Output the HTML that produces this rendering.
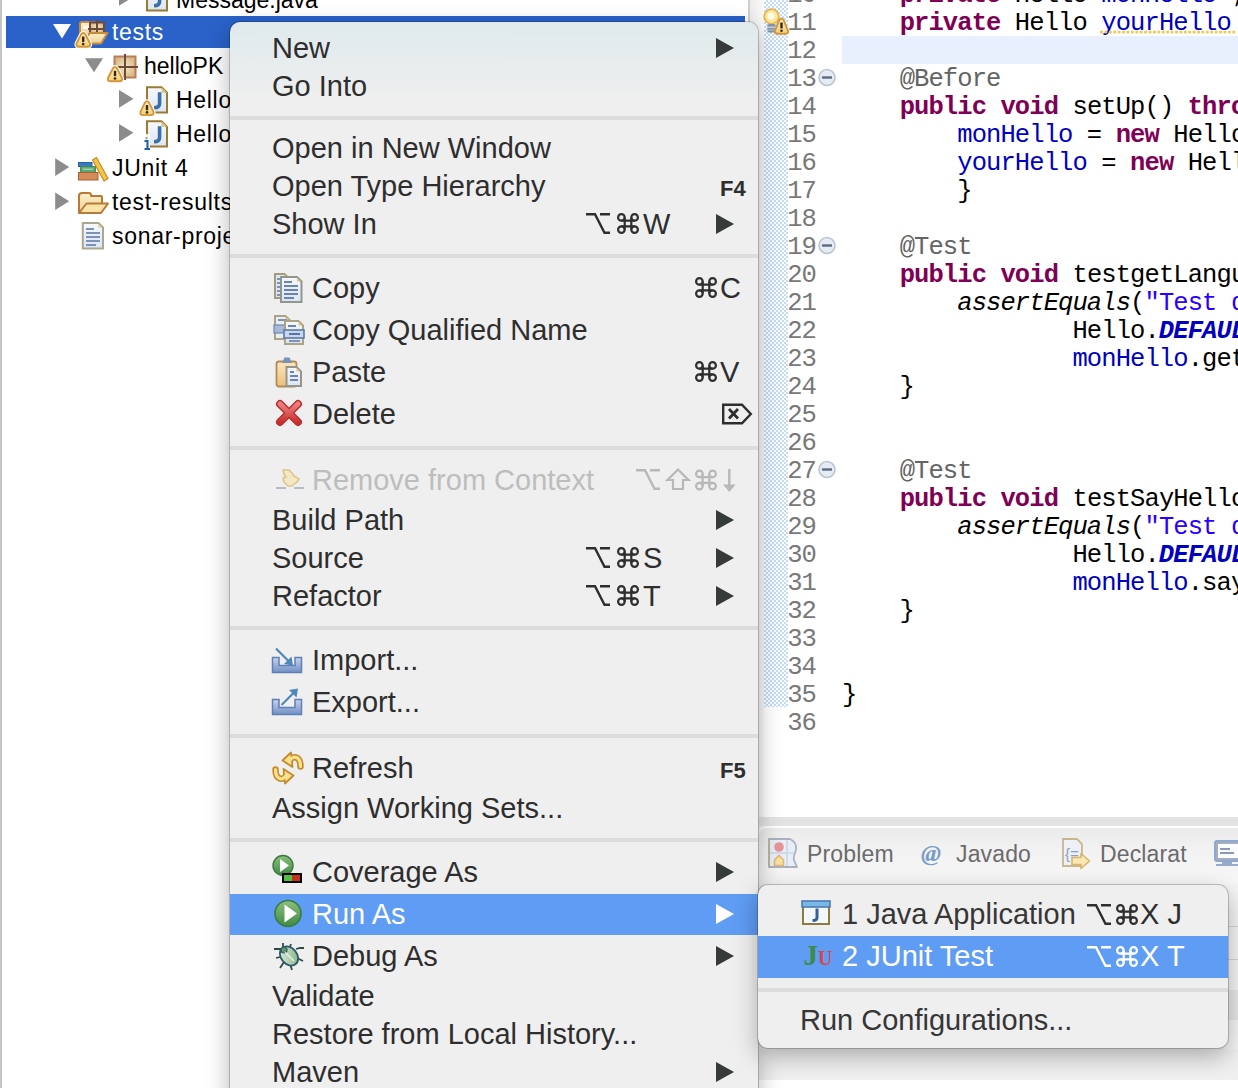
<!DOCTYPE html>
<html><head><meta charset="utf-8">
<style>
*{margin:0;padding:0;box-sizing:border-box}
html,body{width:1238px;height:1088px;overflow:hidden;background:#fff}
body{position:relative;font-family:"Liberation Sans",sans-serif}
.abs{position:absolute}
svg{position:absolute;overflow:visible}
.tr{position:absolute;height:34px;line-height:34px;font-size:23px;letter-spacing:0.7px;color:#000;white-space:nowrap}
.ln{position:absolute;left:700px;width:116px;text-align:right;font-family:"Liberation Mono",monospace;font-size:25.5px;letter-spacing:-0.9px;color:#787878;height:28px;line-height:28px}
.cd{position:absolute;left:842px;font-family:"Liberation Mono",monospace;font-size:25.5px;letter-spacing:-0.9px;color:#000;height:28px;line-height:28px;white-space:pre}
.k{color:#7f0055;font-weight:bold}
.f{color:#0000c0}
.s{color:#2a00ff}
.a{color:#646464}
.sf{color:#0000c0;font-weight:bold;font-style:italic}
.it{font-style:italic}
.menu{position:absolute;border-radius:10px;box-shadow:0 0 0 1px rgba(0,0,0,0.20),0 8px 24px rgba(0,0,0,0.30);overflow:hidden;background:#efefef}
.mi{position:absolute;left:0;right:0;font-size:29px;color:#363636;white-space:nowrap}
.mi .t{position:absolute;top:0}
.sc{position:absolute;top:0;font-size:26px;color:#2e2e2e}
.sep{position:absolute;left:0;right:0;height:4px;background:#dcdcdc}
.arr{position:absolute;width:0;height:0;border-top:10px solid transparent;border-bottom:10px solid transparent;border-left:18px solid #363a3a}
.tab{position:absolute;font-size:23px;letter-spacing:0.15px;color:#6b6b6b;line-height:32px;white-space:nowrap}
</style></head>
<body>
<div class="abs" style="left:0;top:0;width:2px;height:1088px;background:#c4c5c0"></div>
<div class="tr" style="left:176px;top:-17px;letter-spacing:0">Message.java</div>
<div class="abs" style="left:6px;top:16px;width:739px;height:32px;background:#2a62ca"></div>
<div class="tr" style="left:112px;top:15px;color:#fff;">tests</div>
<div class="tr" style="left:144px;top:49px;color:#000;letter-spacing:0;">helloPK</div>
<div class="tr" style="left:176px;top:83px;color:#000;">HelloTest</div>
<div class="tr" style="left:176px;top:117px;color:#000;">HelloTest</div>
<div class="tr" style="left:112px;top:151px;color:#000;">JUnit 4</div>
<div class="tr" style="left:112px;top:185px;color:#000;">test-results</div>
<div class="tr" style="left:112px;top:219px;color:#000;">sonar-project.properties</div>
<div class="abs" style="left:748px;top:0;width:2px;height:1088px;background:#cfcfcf"></div>
<div class="abs" style="left:750px;top:0;width:14px;height:1088px;background:linear-gradient(90deg,#ececec,#fafafa)"></div>
<div class="abs" style="left:764px;top:0;width:24px;height:707px;background:repeating-conic-gradient(#c2dbfb 0 25%,#ffffff 0 50%) 0 0/4px 4px"></div>
<div class="abs" style="left:842px;top:36px;width:396px;height:28px;background:#e8f0fd"></div>
<div class="ln" style="top:-18.5px">10</div>
<div class="cd" style="top:-18.5px">    <span class="k">private</span> Hello <span class="f">monHello</span> ;</div>
<div class="ln" style="top:9.5px">11</div>
<div class="cd" style="top:9.5px">    <span class="k">private</span> Hello <span class="f">yourHello</span> ;</div>
<div class="ln" style="top:37.5px">12</div>
<div class="ln" style="top:65.5px">13</div>
<div class="cd" style="top:65.5px">    <span class="a">@Before</span></div>
<div class="ln" style="top:93.5px">14</div>
<div class="cd" style="top:93.5px">    <span class="k">public</span> <span class="k">void</span> setUp() <span class="k">throws</span> Exception {</div>
<div class="ln" style="top:121.5px">15</div>
<div class="cd" style="top:121.5px">        <span class="f">monHello</span> = <span class="k">new</span> Hello();</div>
<div class="ln" style="top:149.5px">16</div>
<div class="cd" style="top:149.5px">        <span class="f">yourHello</span> = <span class="k">new</span> Hello();</div>
<div class="ln" style="top:177.5px">17</div>
<div class="cd" style="top:177.5px">        }</div>
<div class="ln" style="top:205.5px">18</div>
<div class="ln" style="top:233.5px">19</div>
<div class="cd" style="top:233.5px">    <span class="a">@Test</span></div>
<div class="ln" style="top:261.5px">20</div>
<div class="cd" style="top:261.5px">    <span class="k">public</span> <span class="k">void</span> testgetLanguage() {</div>
<div class="ln" style="top:289.5px">21</div>
<div class="cd" style="top:289.5px">        <span class="it">assertEquals</span>(<span class="s">"Test de"</span>,</div>
<div class="ln" style="top:317.5px">22</div>
<div class="cd" style="top:317.5px">                Hello.<span class="sf">DEFAULT</span>,</div>
<div class="ln" style="top:345.5px">23</div>
<div class="cd" style="top:345.5px">                <span class="f">monHello</span>.getLanguage());</div>
<div class="ln" style="top:373.5px">24</div>
<div class="cd" style="top:373.5px">    }</div>
<div class="ln" style="top:401.5px">25</div>
<div class="ln" style="top:429.5px">26</div>
<div class="ln" style="top:457.5px">27</div>
<div class="cd" style="top:457.5px">    <span class="a">@Test</span></div>
<div class="ln" style="top:485.5px">28</div>
<div class="cd" style="top:485.5px">    <span class="k">public</span> <span class="k">void</span> testSayHello() {</div>
<div class="ln" style="top:513.5px">29</div>
<div class="cd" style="top:513.5px">        <span class="it">assertEquals</span>(<span class="s">"Test de"</span>,</div>
<div class="ln" style="top:541.5px">30</div>
<div class="cd" style="top:541.5px">                Hello.<span class="sf">DEFAULT</span>,</div>
<div class="ln" style="top:569.5px">31</div>
<div class="cd" style="top:569.5px">                <span class="f">monHello</span>.sayHello());</div>
<div class="ln" style="top:597.5px">32</div>
<div class="cd" style="top:597.5px">    }</div>
<div class="ln" style="top:625.5px">33</div>
<div class="ln" style="top:653.5px">34</div>
<div class="ln" style="top:681.5px">35</div>
<div class="cd" style="top:681.5px">}</div>
<div class="ln" style="top:709.5px">36</div>
<div class="abs" style="left:759px;top:817px;width:479px;height:9px;background:#e3e3e3"></div>
<div class="abs" style="left:759px;top:826px;width:479px;height:262px;background:#f5f5f5"></div>
<div class="abs" style="left:759px;top:826px;width:479px;height:58px;background:linear-gradient(#ebebeb,#f2f2f2 40%,#f8f8f8);border-top:2px solid #fff;border-top-left-radius:8px"></div>
<div class="tab" style="left:807px;top:838px">Problem</div>
<div class="tab" style="left:956px;top:838px">Javado</div>
<div class="tab" style="left:1100px;top:838px">Declarat</div>
<div class="abs" style="left:759px;top:926px;width:479px;height:1px;background:#d6d6d6"></div>
<div class="abs" style="left:759px;top:959px;width:479px;height:1px;background:#d6d6d6"></div>
<div class="abs" style="left:759px;top:990px;width:479px;height:30px;background:#e8e8e8"></div>
<div class="abs" style="left:759px;top:1049px;width:479px;height:31px;background:#f0f0f0"></div>
<div class="abs" style="left:759px;top:1080px;width:479px;height:8px;background:#fff"></div>
<svg style="left:0;top:0" width="1238" height="1088"><defs>
<linearGradient id="gwarn" x1="0" y1="0" x2="0" y2="1"><stop offset="0" stop-color="#fcf0c0"/><stop offset="1" stop-color="#f0cf78"/></linearGradient>
<linearGradient id="gjf" x1="0" y1="0" x2="0" y2="1"><stop offset="0" stop-color="#f6f9fd"/><stop offset="1" stop-color="#dbe5f3"/></linearGradient>
<linearGradient id="gtan" x1="0" y1="0" x2="0" y2="1"><stop offset="0" stop-color="#fbf0cc"/><stop offset="1" stop-color="#ecd092"/></linearGradient>
<radialGradient id="gpkg"><stop offset="0" stop-color="#f6ecc8"/><stop offset="1" stop-color="#d9b98c"/></radialGradient>
<linearGradient id="ggreen" x1="0" y1="0" x2="0" y2="1"><stop offset="0" stop-color="#8cc07c"/><stop offset="1" stop-color="#3f8a44"/></linearGradient>
<linearGradient id="gred" x1="0" y1="0" x2="0" y2="1"><stop offset="0" stop-color="#ee8080"/><stop offset="1" stop-color="#c83030"/></linearGradient>
<linearGradient id="gtray" x1="0" y1="0" x2="0" y2="1"><stop offset="0" stop-color="#c8d4ec"/><stop offset="1" stop-color="#7090c4"/></linearGradient>
<linearGradient id="ggold" x1="0" y1="0" x2="0" y2="1"><stop offset="0" stop-color="#fff0b0"/><stop offset="1" stop-color="#f0b848"/></linearGradient>
<linearGradient id="gclip" x1="0" y1="0" x2="0" y2="1"><stop offset="0" stop-color="#fbe8c0"/><stop offset="1" stop-color="#eac078"/></linearGradient>
<linearGradient id="gbug" x1="0" y1="0" x2="1" y2="1"><stop offset="0" stop-color="#e6f2e0"/><stop offset="1" stop-color="#7fae84"/></linearGradient>
</defs><polygon points="53,24 71,24 62,38.6" fill="#fff"/><polygon points="85,58.2 103,58.2 94,72.3" fill="#8c8c8c"/><polygon points="119,-12 133.5,-3.1500000000000004 119,5.699999999999999" fill="#8c8c8c"/><polygon points="119,90 133.5,98.85 119,107.7" fill="#8c8c8c"/><polygon points="119,124 133.5,132.85 119,141.7" fill="#8c8c8c"/><polygon points="55.2,158.2 69.2,167.04999999999998 55.2,175.89999999999998" fill="#8c8c8c"/><polygon points="55.2,192.4 69.2,201.25 55.2,210.1" fill="#8c8c8c"/><path d="M80,24 Q80,22 82,22 H94 V36 H80 Z" fill="url(#gtan)" stroke="#c98b3c" stroke-width="2"/><rect x="83" y="26" width="10" height="3" fill="#fff" opacity="0.8"/><rect x="90" y="22.5" width="14" height="11" fill="url(#gpkg)" stroke="#6e4a38" stroke-width="2"/><path d="M97,20 V34 M88,29 H105" stroke="#6e4a38" stroke-width="2"/><path d="M89.5,33 H107.5 L101,43.5 H83.5 Z" fill="url(#gtan)" stroke="#c98b3c" stroke-width="2" stroke-linejoin="round"/><path d="M81.0,34.6 Q83.2,31.4 85.5,34.6 L89.9,43.3 Q91.1,46.8 87.3,46.8 L79.2,46.8 Q75.4,46.8 76.6,43.3 Z" fill="#fff" stroke="#fff" stroke-width="4" stroke-linejoin="round"/><path d="M81.0,34.6 Q83.2,31.4 85.5,34.6 L89.9,43.3 Q91.1,46.8 87.3,46.8 L79.2,46.8 Q75.4,46.8 76.6,43.3 Z" fill="url(#gwarn)" stroke="#d4963a" stroke-width="1.9" stroke-linejoin="round"/><rect x="82.0" y="36.6" width="2.4" height="5.3" rx="0.6" fill="#3a2610"/><circle cx="83.2" cy="44.1" r="1.3" fill="#3a2610"/><rect x="114.5" y="56.5" width="21" height="21" fill="url(#gpkg)" stroke="#b97e58" stroke-width="2"/><path d="M125,54 V80 M113,67 H138" stroke="#6e4a38" stroke-width="2"/><path d="M112.8,68.6 Q115.0,65.4 117.2,68.6 L121.9,77.8 Q123.1,81.3 119.3,81.3 L110.7,81.3 Q106.9,81.3 108.1,77.8 Z" fill="#fff" stroke="#fff" stroke-width="4" stroke-linejoin="round"/><path d="M112.8,68.6 Q115.0,65.4 117.2,68.6 L121.9,77.8 Q123.1,81.3 119.3,81.3 L110.7,81.3 Q106.9,81.3 108.1,77.8 Z" fill="url(#gwarn)" stroke="#d4963a" stroke-width="1.9" stroke-linejoin="round"/><rect x="113.8" y="70.8" width="2.4" height="5.4" rx="0.6" fill="#3a2610"/><circle cx="115.0" cy="78.5" r="1.3" fill="#3a2610"/><path d="M147,-14.799999999999997 H161.5 L167,-9.299999999999997 V10.500000000000004 H147 Z" fill="url(#gjf)" stroke="#9b7b32" stroke-width="2"/><path d="M161.5,-14.799999999999997 V-9.299999999999997 H167 Z" fill="#d9c588"/><path d="M159.6,-9.799999999999997 V1.2000000000000028 Q159.6,5.700000000000003 154,5.700000000000003" fill="none" stroke="#3d6ea6" stroke-width="3.6"/><path d="M147,87.2 H161.5 L167,92.7 V112.5 H147 Z" fill="url(#gjf)" stroke="#9b7b32" stroke-width="2"/><path d="M161.5,87.2 V92.7 H167 Z" fill="#d9c588"/><path d="M159.6,92.2 V103.2 Q159.6,107.7 154,107.7" fill="none" stroke="#3d6ea6" stroke-width="3.6"/><path d="M144.8,102.9 Q147.0,99.7 149.2,102.9 L153.4,111.6 Q154.6,115.1 150.8,115.1 L143.2,115.1 Q139.4,115.1 140.6,111.6 Z" fill="#fff" stroke="#fff" stroke-width="4" stroke-linejoin="round"/><path d="M144.8,102.9 Q147.0,99.7 149.2,102.9 L153.4,111.6 Q154.6,115.1 150.8,115.1 L143.2,115.1 Q139.4,115.1 140.6,111.6 Z" fill="url(#gwarn)" stroke="#d4963a" stroke-width="1.9" stroke-linejoin="round"/><rect x="145.8" y="105.0" width="2.4" height="5.3" rx="0.6" fill="#3a2610"/><circle cx="147.0" cy="112.4" r="1.3" fill="#3a2610"/><path d="M147,121.3 H161.5 L167,126.8 V146.6 H147 Z" fill="url(#gjf)" stroke="#9b7b32" stroke-width="2"/><path d="M161.5,121.3 V126.8 H167 Z" fill="#d9c588"/><path d="M159.6,126.3 V137.3 Q159.6,141.8 154,141.8" fill="none" stroke="#3d6ea6" stroke-width="3.6"/><rect x="144" y="134" width="6" height="16" fill="#fff" opacity="0.85"/><path d="M146.5,137.5 V138.5 M144.5,141 H147.5 V149 M144.5,149 H150" stroke="#1f5fa8" stroke-width="2" fill="none"/><rect x="78.5" y="162.5" width="13.5" height="4" fill="#3a7ac2" stroke="#2c5d9c" stroke-width="1"/><rect x="80.5" y="166.5" width="15" height="6" fill="#5aa97a" stroke="#3f8a5c" stroke-width="1"/><rect x="83" y="168.5" width="10" height="1.5" fill="#9fd0a8"/><rect x="78.5" y="172.5" width="19.5" height="7.5" fill="#d48c58" stroke="#a85e32" stroke-width="1"/><polygon points="92.5,160 96.5,157.5 108,178.5 104,181" fill="#f2c640" stroke="#c88a30" stroke-width="1.2" stroke-linejoin="round"/><path d="M79,213 V196 Q79,193 82,193 H89 Q91,193 91,195 V196 H101 Q102,196 102,197 V203" fill="url(#gtan)" stroke="#b77a38" stroke-width="2" stroke-linejoin="round"/><path d="M79,213 L86.5,203.5 H108 L101,213 Z" fill="#f9e3a6" stroke="#b77a38" stroke-width="2" stroke-linejoin="round"/><path d="M82.8,223 H98.5 L103.0,227.5 V248.5 H82.8 Z" fill="url(#gjf)" stroke="#a9a78e" stroke-width="2"/><path d="M98.5,223.5 V227.5 H102.5 Z" fill="#dcc894"/><rect x="86" y="228" width="8" height="2" fill="#7c92bb"/><rect x="86" y="232" width="14" height="2" fill="#7c92bb"/><rect x="86" y="236" width="14" height="2" fill="#7c92bb"/><rect x="86" y="240" width="14" height="2" fill="#7c92bb"/><rect x="86" y="244" width="10" height="2" fill="#7c92bb"/><circle cx="771.5" cy="16.5" r="7.3" fill="#fbe7a0" stroke="#e8b84c" stroke-width="1.8"/><circle cx="771" cy="16" r="3.5" fill="#fffcea"/><rect x="767.5" y="24" width="8" height="8.5" rx="1.5" fill="#8593aa"/><rect x="767.5" y="26.5" width="8" height="1.6" fill="#c9d1dc"/><rect x="767.5" y="29.5" width="8" height="1.2" fill="#b0bacb"/><path d="M779.3,20.1 Q781.5,16.9 783.7,20.1 L787.9,30.3 Q789.1,33.8 785.3,33.8 L777.7,33.8 Q773.9,33.8 775.1,30.3 Z" fill="url(#gwarn)" stroke="#d4963a" stroke-width="1.9" stroke-linejoin="round"/><rect x="780.3" y="22.6" width="2.4" height="5.8" rx="0.6" fill="#3a2610"/><circle cx="781.5" cy="30.8" r="1.3" fill="#3a2610"/><circle cx="827" cy="77.5" r="8" fill="#e5ebf2" stroke="#bcc6d3" stroke-width="1.6"/><rect x="822" y="76.3" width="10" height="2.4" fill="#5c6b80"/><circle cx="827" cy="245.5" r="8" fill="#e5ebf2" stroke="#bcc6d3" stroke-width="1.6"/><rect x="822" y="244.3" width="10" height="2.4" fill="#5c6b80"/><circle cx="827" cy="469.5" r="8" fill="#e5ebf2" stroke="#bcc6d3" stroke-width="1.6"/><rect x="822" y="468.3" width="10" height="2.4" fill="#5c6b80"/><path d="M1101.5,32 H1238" stroke="#f0c850" stroke-width="3.2" stroke-dasharray="0.01 4.4" stroke-linecap="round"/><path d="M769,839 H790 Q797,842 796,850 Q793,857 794,860 L797,867 H769 Z" fill="#e7eef6" stroke="#a9b1bf" stroke-width="1.8" stroke-linejoin="round"/><path d="M769,839 V867" stroke="#b9b49a" stroke-width="1.8"/><path d="M787,840 V866 M770,853 H793" stroke="#cbd6e6" stroke-width="1.6"/><circle cx="779" cy="847" r="4.8" fill="#e8959a"/><path d="M774.5,865.5 V860 L779,855.5 L783.5,860 V865.5 Z" fill="#f7e3a0" stroke="#e5b47c" stroke-width="1.6"/><text x="921" y="861" font-family="Liberation Serif" font-style="italic" font-weight="bold" font-size="24" fill="#7a9cc6">@</text><path d="M1063,839 H1077 L1082,844 V866 H1063 Z" fill="#edf1f7" stroke="#c8b68e" stroke-width="1.8"/><text x="1065" y="859" font-family="Liberation Sans" font-size="15" fill="#8aa0c0">{=</text><path d="M1072,857.5 H1081 V853.5 L1089.5,861 L1081,868.5 V864.5 H1072 Z" fill="#fbe8b0" stroke="#d8b470" stroke-width="1.6" stroke-linejoin="round"/><rect x="1215" y="841" width="30" height="20" rx="2" fill="#a4aec0" stroke="#8fa8d0" stroke-width="2"/><rect x="1218" y="844" width="20" height="14" fill="#fbfdff"/><rect x="1220" y="848" width="10" height="2" fill="#8d98b8"/><rect x="1220" y="852" width="14" height="2" fill="#8d98b8"/><rect x="1222" y="862" width="10" height="2" fill="#98abcc"/><rect x="1216" y="864" width="22" height="2" fill="#98abcc"/></svg>
<div class="menu" style="left:230px;top:22px;width:528px;height:1100px;background:linear-gradient(#e0eaeb 0,#e6eced 35px,#efefef 78px,#efefef)">
<div class="mi" style="top:7px;height:38px;line-height:38px;color:#2e2e2e"><span class="t" style="left:42px">New</span></div>
<div class="arr" style="left:486px;top:16px;border-left-color:#363a3a"></div>
<div class="mi" style="top:45px;height:38px;line-height:38px;color:#2e2e2e"><span class="t" style="left:42px">Go Into</span></div>
<div class="sep" style="top:94px"></div>
<div class="mi" style="top:107px;height:38px;line-height:38px;color:#2e2e2e"><span class="t" style="left:42px">Open in New Window</span></div>
<div class="mi" style="top:145px;height:38px;line-height:38px;color:#2e2e2e"><span class="t" style="left:42px">Open Type Hierarchy</span></div>
<div class="sc" style="left:490px;top:148px;line-height:38px;font-size:22px;font-weight:bold;color:#2e2e2e">F4</div>
<div class="mi" style="top:183px;height:38px;line-height:38px;color:#2e2e2e"><span class="t" style="left:42px">Show In</span></div>
<div class="sc" style="left:413px;top:183px;line-height:38px;font-size:29px;color:#2e2e2e">W</div>
<div class="arr" style="left:486px;top:192px;border-left-color:#363a3a"></div>
<div class="sep" style="top:232px"></div>
<div class="mi" style="top:247px;height:38px;line-height:38px;color:#2e2e2e"><span class="t" style="left:82px">Copy</span></div>
<div class="sc" style="left:490px;top:247px;line-height:38px;font-size:29px;color:#2e2e2e">C</div>
<div class="mi" style="top:289px;height:38px;line-height:38px;color:#2e2e2e"><span class="t" style="left:82px">Copy Qualified Name</span></div>
<div class="mi" style="top:331px;height:38px;line-height:38px;color:#2e2e2e"><span class="t" style="left:82px">Paste</span></div>
<div class="sc" style="left:490px;top:331px;line-height:38px;font-size:29px;color:#2e2e2e">V</div>
<div class="mi" style="top:373px;height:38px;line-height:38px;color:#2e2e2e"><span class="t" style="left:82px">Delete</span></div>
<div class="sep" style="top:424px"></div>
<div class="mi" style="top:439px;height:38px;line-height:38px;color:#bdbdbd"><span class="t" style="left:82px">Remove from Context</span></div>
<div class="mi" style="top:479px;height:38px;line-height:38px;color:#2e2e2e"><span class="t" style="left:42px">Build Path</span></div>
<div class="arr" style="left:486px;top:488px;border-left-color:#363a3a"></div>
<div class="mi" style="top:517px;height:38px;line-height:38px;color:#2e2e2e"><span class="t" style="left:42px">Source</span></div>
<div class="sc" style="left:413px;top:517px;line-height:38px;font-size:29px;color:#2e2e2e">S</div>
<div class="arr" style="left:486px;top:526px;border-left-color:#363a3a"></div>
<div class="mi" style="top:555px;height:38px;line-height:38px;color:#2e2e2e"><span class="t" style="left:42px">Refactor</span></div>
<div class="sc" style="left:413px;top:555px;line-height:38px;font-size:29px;color:#2e2e2e">T</div>
<div class="arr" style="left:486px;top:564px;border-left-color:#363a3a"></div>
<div class="sep" style="top:604px"></div>
<div class="mi" style="top:619px;height:38px;line-height:38px;color:#2e2e2e"><span class="t" style="left:82px">Import...</span></div>
<div class="mi" style="top:661px;height:38px;line-height:38px;color:#2e2e2e"><span class="t" style="left:82px">Export...</span></div>
<div class="sep" style="top:712px"></div>
<div class="mi" style="top:727px;height:38px;line-height:38px;color:#2e2e2e"><span class="t" style="left:82px">Refresh</span></div>
<div class="sc" style="left:490px;top:730px;line-height:38px;font-size:22px;font-weight:bold;color:#2e2e2e">F5</div>
<div class="mi" style="top:767px;height:38px;line-height:38px;color:#2e2e2e"><span class="t" style="left:42px">Assign Working Sets...</span></div>
<div class="sep" style="top:816px"></div>
<div class="mi" style="top:831px;height:38px;line-height:38px;color:#2e2e2e"><span class="t" style="left:82px">Coverage As</span></div>
<div class="arr" style="left:486px;top:840px;border-left-color:#363a3a"></div>
<div class="abs" style="left:0;right:0;top:872px;height:41px;background:#5f9cf4"></div>
<div class="mi" style="top:873px;height:38px;line-height:38px;color:#fff"><span class="t" style="left:82px">Run As</span></div>
<div class="arr" style="left:486px;top:882px;border-left-color:#fff"></div>
<div class="mi" style="top:915px;height:38px;line-height:38px;color:#2e2e2e"><span class="t" style="left:82px">Debug As</span></div>
<div class="arr" style="left:486px;top:924px;border-left-color:#363a3a"></div>
<div class="mi" style="top:955px;height:38px;line-height:38px;color:#2e2e2e"><span class="t" style="left:42px">Validate</span></div>
<div class="mi" style="top:993px;height:38px;line-height:38px;color:#2e2e2e"><span class="t" style="left:42px">Restore from Local History...</span></div>
<div class="mi" style="top:1031px;height:38px;line-height:38px;color:#2e2e2e"><span class="t" style="left:42px">Maven</span></div>
<div class="arr" style="left:486px;top:1040px;border-left-color:#363a3a"></div>
</div>
<div class="menu" style="left:758px;top:885px;width:470px;height:163px">
<div class="abs" style="left:0;right:0;top:51px;height:42px;background:#5f9cf4"></div>
<div class="mi" style="top:10px;height:38px;line-height:38px"><span class="t" style="left:84px">1 Java Application</span></div>
<div class="mi" style="top:52px;height:38px;line-height:38px;color:#fff"><span class="t" style="left:84px">2 JUnit Test</span></div>
<div class="sep" style="top:103px"></div>
<div class="mi" style="top:116px;height:38px;line-height:38px"><span class="t" style="left:42px">Run Configurations...</span></div>
</div>
<div class="sc" style="left:1140px;top:895px;line-height:38px;font-size:29px;color:#2e2e2e">X J</div>
<div class="sc" style="left:1140px;top:937px;line-height:38px;font-size:29px;color:#fff">X T</div>
<svg style="left:0;top:0" width="1238" height="1088"><defs>
<linearGradient id="hwarn" x1="0" y1="0" x2="0" y2="1"><stop offset="0" stop-color="#fcf0c0"/><stop offset="1" stop-color="#f0cf78"/></linearGradient>
<linearGradient id="hjf" x1="0" y1="0" x2="0" y2="1"><stop offset="0" stop-color="#f6f9fd"/><stop offset="1" stop-color="#dbe5f3"/></linearGradient>
<linearGradient id="htan" x1="0" y1="0" x2="0" y2="1"><stop offset="0" stop-color="#fbf0cc"/><stop offset="1" stop-color="#ecd092"/></linearGradient>
<radialGradient id="hpkg"><stop offset="0" stop-color="#f6ecc8"/><stop offset="1" stop-color="#d9b98c"/></radialGradient>
<linearGradient id="hgreen" x1="0" y1="0" x2="0" y2="1"><stop offset="0" stop-color="#8cc07c"/><stop offset="1" stop-color="#3f8a44"/></linearGradient>
<linearGradient id="hred" x1="0" y1="0" x2="0" y2="1"><stop offset="0" stop-color="#ee8080"/><stop offset="1" stop-color="#c83030"/></linearGradient>
<linearGradient id="htray" x1="0" y1="0" x2="0" y2="1"><stop offset="0" stop-color="#c8d4ec"/><stop offset="1" stop-color="#7090c4"/></linearGradient>
<linearGradient id="hgold" x1="0" y1="0" x2="0" y2="1"><stop offset="0" stop-color="#fff0b0"/><stop offset="1" stop-color="#f0b848"/></linearGradient>
<linearGradient id="hclip" x1="0" y1="0" x2="0" y2="1"><stop offset="0" stop-color="#fbe8c0"/><stop offset="1" stop-color="#eac078"/></linearGradient>
<linearGradient id="hbug" x1="0" y1="0" x2="1" y2="1"><stop offset="0" stop-color="#e6f2e0"/><stop offset="1" stop-color="#7fae84"/></linearGradient>
</defs><path d="M275,274 H284.5 L289,278.5 V298 H275 Z" fill="#dfe7f1" stroke="#a19b7b" stroke-width="2"/><path d="M284.5,274.5 V278.5 H288.5 Z" fill="#d9c588"/><rect x="277" y="278" width="5" height="2" fill="#7c92bb"/><rect x="277" y="282" width="5" height="2" fill="#7c92bb"/><rect x="277" y="286" width="5" height="2" fill="#7c92bb"/><rect x="277" y="290" width="5" height="2" fill="#7c92bb"/><rect x="277" y="294" width="5" height="2" fill="#7c92bb"/><path d="M281,277 H297.0 L301.5,281.5 V302 H281 Z" fill="url(#hjf)" stroke="#90968c" stroke-width="2"/><path d="M297.0,277.5 V281.5 H301.0 Z" fill="#d9c588"/><rect x="284" y="281" width="8" height="2" fill="#6a84b4"/><rect x="284" y="285" width="14" height="2" fill="#6a84b4"/><rect x="284" y="289" width="14" height="2" fill="#6a84b4"/><rect x="284" y="293" width="14" height="2" fill="#6a84b4"/><rect x="284" y="297" width="10" height="2" fill="#6a84b4"/><path d="M275,316 H285.5 L290,320.5 V339 H275 Z" fill="#e9eef5" stroke="#aba484" stroke-width="2"/><path d="M285.5,316.5 V320.5 H289.5 Z" fill="#d9c588"/><rect x="278" y="319" width="9" height="2" fill="#7c92bb"/><rect x="274" y="325" width="17" height="8" fill="#a8b8d8" stroke="#7088b0" stroke-width="1.2"/><path d="M285,321 H298.5 L303,325.5 V344 H285 Z" fill="url(#hjf)" stroke="#aba484" stroke-width="2"/><path d="M298.5,321.5 V325.5 H302.5 Z" fill="#d9c588"/><rect x="288" y="325" width="8" height="2" fill="#6a84b4"/><rect x="284" y="330" width="20" height="8" fill="#c8d6ee" stroke="#6078a4" stroke-width="1.6"/><rect x="289" y="333" width="11" height="2" fill="#5a74a4"/><rect x="289" y="340" width="11" height="2" fill="#7c92bb"/><rect x="276.5" y="361.5" width="20" height="25" rx="2.5" fill="url(#hclip)" stroke="#b38a58" stroke-width="1.8"/><path d="M282,363 L284.5,357.5 H289.5 L292,363 Z" fill="#7a92b8"/><path d="M286.5,367 H296.5 L301.0,371.5 V386 H286.5 Z" fill="url(#hjf)" stroke="#94968c" stroke-width="2"/><path d="M296.5,367.5 V371.5 H300.5 Z" fill="#d9c588"/><rect x="290" y="371" width="4" height="2" fill="#6a84b4"/><rect x="290" y="375" width="8" height="2" fill="#6a84b4"/><rect x="290" y="379" width="8" height="2" fill="#6a84b4"/><path d="M280,404 L298,422 M298,404 L280,422" stroke="#b73030" stroke-width="8" stroke-linecap="round"/><path d="M280,404 L298,422 M298,404 L280,422" stroke="url(#hred)" stroke-width="5" stroke-linecap="round"/><path d="M283,470 H289 L292,473 L294,476 L299,479 L297,482 L292,486 H288 L284,482 L283,478 L286,477 L284,474 Z" fill="#f3e7c4" stroke="#dcc48e" stroke-width="1.6" stroke-linejoin="round"/><rect x="276" y="487" width="10" height="2" fill="#b8bcc8"/><rect x="294" y="487" width="10" height="2" fill="#b8bcc8"/><path d="M272.5,657.5 H279 V665.5 H295 V657.5 H301.5 V672.5 H272.5 Z" fill="url(#htray)" stroke="#5f7fb8" stroke-width="1.5"/><path d="M272.5,699.5 H279 V707.5 H295 V699.5 H301.5 V714.5 H272.5 Z" fill="url(#htray)" stroke="#5f7fb8" stroke-width="1.5"/><path d="M276,648.5 L290,662.5" stroke="#4f87bb" stroke-width="2.2"/><path d="M293,665.5 L284,664 L291.5,656.5 Z" fill="#4f87bb"/><path d="M281.5,705 L294,692.5" stroke="#4f87bb" stroke-width="2.2"/><path d="M298,688.5 L296.5,697.5 L289,690 Z" fill="#4f87bb"/><g transform="rotate(0 288 768)"><path d="M289.5,761 C292,755.5 300.5,755 300.5,766.5" fill="none" stroke="#c48a2c" stroke-width="6.5" stroke-linecap="round"/><polygon points="282.5,760.5 291,752.5 292.5,767" fill="#fbe08a" stroke="#c48a2c" stroke-width="1.8" stroke-linejoin="round"/><path d="M289.5,761 C292,755.5 300.5,755 300.5,766.5" fill="none" stroke="#fbe08a" stroke-width="3.2" stroke-linecap="round"/></g><g transform="rotate(180 288 768)"><path d="M289.5,761 C292,755.5 300.5,755 300.5,766.5" fill="none" stroke="#c48a2c" stroke-width="6.5" stroke-linecap="round"/><polygon points="282.5,760.5 291,752.5 292.5,767" fill="#fbe08a" stroke="#c48a2c" stroke-width="1.8" stroke-linejoin="round"/><path d="M289.5,761 C292,755.5 300.5,755 300.5,766.5" fill="none" stroke="#fbe08a" stroke-width="3.2" stroke-linecap="round"/></g><circle cx="283" cy="865.5" r="10" fill="url(#hgreen)" stroke="#3a7a40" stroke-width="1.4"/><polygon points="280,859 289,865.5 280,872" fill="#fff"/><rect x="282" y="873" width="20" height="10" fill="#000"/><rect x="284" y="875" width="8" height="6" fill="#50c040"/><rect x="292" y="875" width="8" height="6" fill="#c83020"/><circle cx="288" cy="913.5" r="13" fill="url(#hgreen)" stroke="#3a7a40" stroke-width="1.6"/><polygon points="284.5,904.5 297,913.5 284.5,922.5" fill="#fff"/><g stroke="#2f4a44" stroke-width="1.8" fill="none"><path d="M283,943 V950 M291,944 L289,950 M274,949 H282 M276,958 L284,956 M296,949 L300,948 H304 M297,958 L303,961 M280,968 L284,962 M292,970 L290,964"/></g><ellipse cx="289" cy="956" rx="8" ry="10.5" transform="rotate(-40 289 956)" fill="url(#hbug)" stroke="#2f5a6a" stroke-width="1.8"/><circle cx="284" cy="950" r="3" fill="#5f9a60" stroke="#2f5a6a" stroke-width="1.2"/><path d="M285,952 L294,961" stroke="#fff" stroke-width="1.5" opacity="0.7"/><rect x="803" y="902" width="26" height="22" fill="#f2f8fe" stroke="#8d7a3e" stroke-width="2"/><rect x="802" y="901" width="28" height="6" fill="#76b8e6" stroke="#5078b0" stroke-width="1.6"/><path d="M817,908.5 V917.5 Q817,920.5 812.5,920.5" fill="none" stroke="#3a5f94" stroke-width="3"/><text x="803.5" y="965" font-family="Liberation Serif" font-weight="bold" font-size="29" fill="#3e8a4a">J</text><text x="818" y="965" font-family="Liberation Serif" font-weight="bold" font-size="20" fill="#d84848">U</text><path d="M586,214.2 H595 L604.5,232.8 H610 M600,214.2 H610" fill="none" stroke="#2e2e2e" stroke-width="2.4"/><g fill="none" stroke="#2e2e2e" stroke-width="2.2"><circle cx="621.4" cy="217.4" r="3.3"/><circle cx="621.4" cy="229.6" r="3.3"/><circle cx="634.6" cy="217.4" r="3.3"/><circle cx="634.6" cy="229.6" r="3.3"/><path d="M624.7,217.4 V229.6 M631.3,217.4 V229.6 M621.4,220.7 H634.6 M621.4,226.3 H634.6"/></g><path d="M586,548.2 H595 L604.5,566.8 H610 M600,548.2 H610" fill="none" stroke="#2e2e2e" stroke-width="2.4"/><g fill="none" stroke="#2e2e2e" stroke-width="2.2"><circle cx="621.4" cy="551.4" r="3.3"/><circle cx="621.4" cy="563.6" r="3.3"/><circle cx="634.6" cy="551.4" r="3.3"/><circle cx="634.6" cy="563.6" r="3.3"/><path d="M624.7,551.4 V563.6 M631.3,551.4 V563.6 M621.4,554.7 H634.6 M621.4,560.3 H634.6"/></g><path d="M586,586.2 H595 L604.5,604.8 H610 M600,586.2 H610" fill="none" stroke="#2e2e2e" stroke-width="2.4"/><g fill="none" stroke="#2e2e2e" stroke-width="2.2"><circle cx="621.4" cy="589.4" r="3.3"/><circle cx="621.4" cy="601.6" r="3.3"/><circle cx="634.6" cy="589.4" r="3.3"/><circle cx="634.6" cy="601.6" r="3.3"/><path d="M624.7,589.4 V601.6 M631.3,589.4 V601.6 M621.4,592.7 H634.6 M621.4,598.3 H634.6"/></g><g fill="none" stroke="#2e2e2e" stroke-width="2.2"><circle cx="699.4" cy="281.4" r="3.3"/><circle cx="699.4" cy="293.6" r="3.3"/><circle cx="712.6" cy="281.4" r="3.3"/><circle cx="712.6" cy="293.6" r="3.3"/><path d="M702.7,281.4 V293.6 M709.3,281.4 V293.6 M699.4,284.7 H712.6 M699.4,290.3 H712.6"/></g><g fill="none" stroke="#2e2e2e" stroke-width="2.2"><circle cx="699.4" cy="365.4" r="3.3"/><circle cx="699.4" cy="377.6" r="3.3"/><circle cx="712.6" cy="365.4" r="3.3"/><circle cx="712.6" cy="377.6" r="3.3"/><path d="M702.7,365.4 V377.6 M709.3,365.4 V377.6 M699.4,368.7 H712.6 M699.4,374.3 H712.6"/></g><path d="M723.2,404.7 H742 L750.8,414.0 L742,423.3 H723.2 Z" fill="none" stroke="#2e2e2e" stroke-width="2.4"/><path d="M729,409.0 L738,418.5 M738,409.0 L729,418.5" stroke="#2e2e2e" stroke-width="2.8"/><path d="M636,470.2 H645 L654.5,488.8 H660 M650,470.2 H660" fill="none" stroke="#b8b8b8" stroke-width="2.4"/><path d="M678,469.5 L688.5,480 H683 V489 H673 V480 H667.5 Z" fill="none" stroke="#b8b8b8" stroke-width="2.2" stroke-linejoin="miter"/><g fill="none" stroke="#b8b8b8" stroke-width="2.2"><circle cx="699.4" cy="473.9" r="3.3"/><circle cx="699.4" cy="486.1" r="3.3"/><circle cx="712.6" cy="473.9" r="3.3"/><circle cx="712.6" cy="486.1" r="3.3"/><path d="M702.7,473.9 V486.1 M709.3,473.9 V486.1 M699.4,477.2 H712.6 M699.4,482.8 H712.6"/></g><path d="M729.3,469 V485" stroke="#b8b8b8" stroke-width="2.4"/><path d="M723,484.5 H735.6 L729.3,492 Z" fill="#b8b8b8"/><path d="M1087,905.2 H1096 L1105.5,923.8 H1111 M1101,905.2 H1111" fill="none" stroke="#2e2e2e" stroke-width="2.4"/><g fill="none" stroke="#2e2e2e" stroke-width="2.2"><circle cx="1120.4" cy="908.4" r="3.3"/><circle cx="1120.4" cy="920.6" r="3.3"/><circle cx="1133.6" cy="908.4" r="3.3"/><circle cx="1133.6" cy="920.6" r="3.3"/><path d="M1123.7,908.4 V920.6 M1130.3,908.4 V920.6 M1120.4,911.7 H1133.6 M1120.4,917.3 H1133.6"/></g><path d="M1087,947.2 H1096 L1105.5,965.8 H1111 M1101,947.2 H1111" fill="none" stroke="#fff" stroke-width="2.4"/><g fill="none" stroke="#fff" stroke-width="2.2"><circle cx="1120.4" cy="950.4" r="3.3"/><circle cx="1120.4" cy="962.6" r="3.3"/><circle cx="1133.6" cy="950.4" r="3.3"/><circle cx="1133.6" cy="962.6" r="3.3"/><path d="M1123.7,950.4 V962.6 M1130.3,950.4 V962.6 M1120.4,953.7 H1133.6 M1120.4,959.3 H1133.6"/></g></svg>
</body></html>
